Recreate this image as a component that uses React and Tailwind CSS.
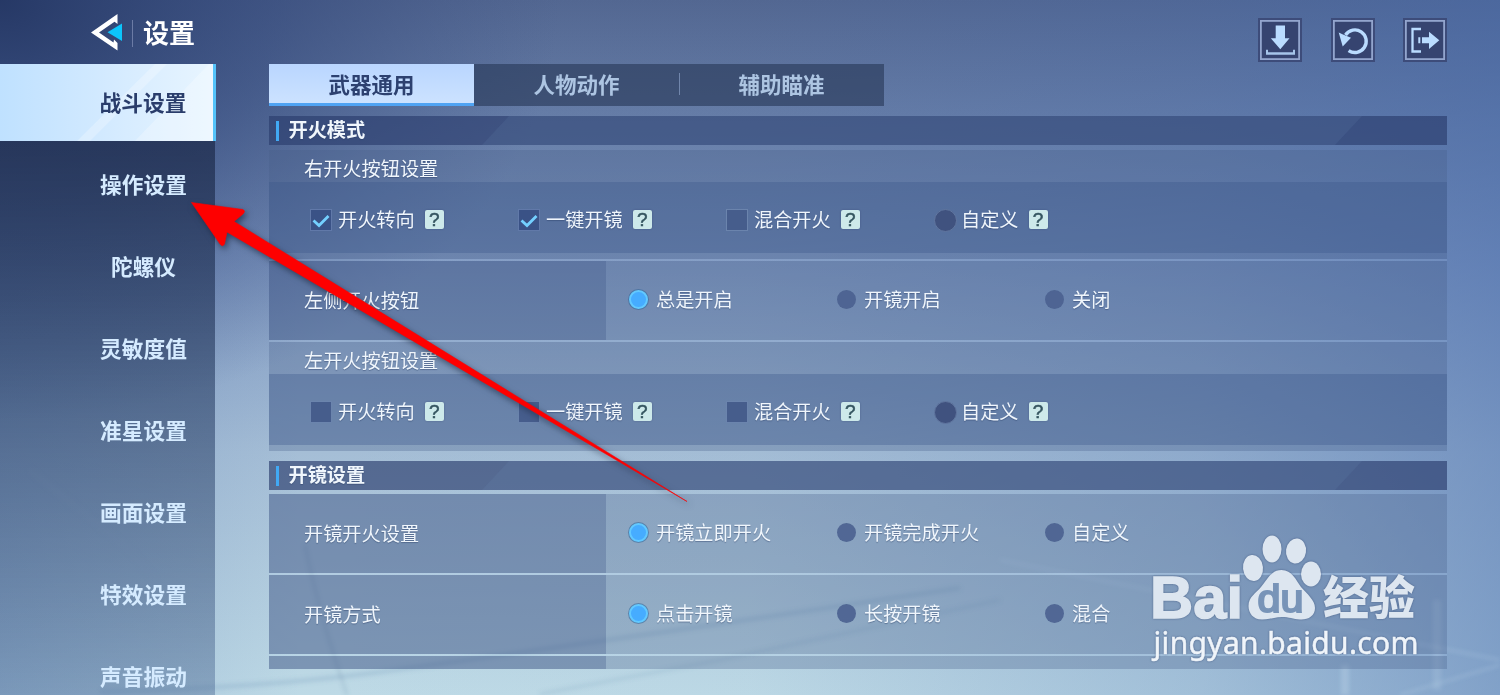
import React from "react";

const SIDEBAR = ["战斗设置", "操作设置", "陀螺仪", "灵敏度值", "准星设置", "画面设置", "特效设置", "声音振动"];
const TABS = ["武器通用", "人物动作", "辅助瞄准"];

function Backdrop() {
  return (
    <svg className="absolute inset-0 h-full w-full" viewBox="0 0 1500 695" preserveAspectRatio="none" aria-hidden="true">
      <defs>
        <linearGradient id="sky" x1="0" y1="0" x2="0" y2="1">
          <stop offset="0" stopColor="#536791" />
          <stop offset="0.16" stopColor="#657ca6" />
          <stop offset="0.38" stopColor="#7f98c0" />
          <stop offset="0.65" stopColor="#a5bed6" />
          <stop offset="1" stopColor="#bedae6" />
        </linearGradient>
        <radialGradient id="corner" gradientUnits="userSpaceOnUse" cx="0" cy="0" r="560" gradientTransform="scale(1 0.75)">
          <stop offset="0" stopColor="#243663" stopOpacity="0.95" />
          <stop offset="0.5" stopColor="#2f4477" stopOpacity="0.55" />
          <stop offset="1" stopColor="#3a4f82" stopOpacity="0" />
        </radialGradient>
        <linearGradient id="east" x1="0" y1="0" x2="1" y2="0">
          <stop offset="0" stopColor="#4569ab" stopOpacity="0.25" />
          <stop offset="0.2" stopColor="#4569ab" stopOpacity="0" />
          <stop offset="0.5" stopColor="#4569ab" stopOpacity="0.02" />
          <stop offset="0.8" stopColor="#4569ab" stopOpacity="0.24" />
          <stop offset="1" stopColor="#4569ab" stopOpacity="0.5" />
        </linearGradient>
        <filter id="soft"><feGaussianBlur stdDeviation="2" /></filter>
      </defs>
      <rect width="1500" height="695" fill="url(#sky)" />
      <rect width="1500" height="695" fill="url(#east)" />
      <rect width="1500" height="695" fill="url(#corner)" />
      <g fill="none" filter="url(#soft)">
        <path d="M100 692 Q260 688 380 672 T800 612 L960 588" stroke="#7195b8" strokeWidth="4" opacity="0.28" />
        <path d="M540 694 L720 660 L1000 600" stroke="#7195b8" strokeWidth="3" opacity="0.22" />
        <path d="M305 545 Q318 610 347 695" stroke="#5f7c9f" strokeWidth="2" opacity="0.28" />
        <path d="M1000 560 L1500 660" stroke="#d4ecf8" strokeWidth="2" opacity="0.25" />
        <path d="M1400 695 L1500 665" stroke="#d4ecf8" strokeWidth="2" opacity="0.25" />
        <path d="M1437 600 V690" stroke="#d4ecf8" strokeWidth="8" opacity="0.15" />
        <path d="M1345 665 V695" stroke="#d4ecf8" strokeWidth="8" opacity="0.25" />
        <path d="M30 470 L130 550 L155 580" stroke="#a3bfd6" strokeWidth="6" opacity="0.2" />
      </g>
    </svg>
  );
}

function IconButton({ children }) {
  return (
    <div className="h-11 w-11 border-2 border-[#3d4c7a] bg-[#364470]">
      <svg viewBox="2 2 40 40" className="h-10 w-10" fill="#badcff">
        <rect x="2.9" y="2.9" width="38.2" height="38.2" fill="none" stroke="#93a5ce" strokeWidth="1.8" />
        {children}
      </svg>
    </div>
  );
}

function Help() {
  return (
    <span className="mt-[-1px] ml-[10px] flex h-[19px] w-[19px] items-center justify-center rounded-[2px] bg-[#cde9ea] font-['Liberation_Sans',sans-serif] text-[19px] leading-none text-[#34545f] shadow-[0_0_2px_rgba(30,45,90,0.4)] [-webkit-text-stroke:0.5px_#34545f] text-shadow-none">
      ?
    </span>
  );
}

function CheckOption({ label, checked, round }) {
  return (
    <div className="flex w-[208px] items-center">
      {round ? (
        <span className="h-[23px] w-[23px] rounded-full border border-[#60769f] bg-[#40527f]" />
      ) : (
        <span className={`h-[22px] w-[22px] border ${checked ? "border-[#6179a9] bg-[#3a5286]" : "border-[#6b84ad] bg-[#465d8c]"}`}>
          {checked && (
            <svg viewBox="0 0 20 20" className="h-5 w-5" fill="none" stroke="#74d0ff" strokeWidth="2.8">
              <path d="M2.5 10.5 L8 15.5 L17.5 6" />
            </svg>
          )}
        </span>
      )}
      <span className={round ? "ml-[4px]" : "ml-[6px]"}>{label}</span>
      <Help />
    </div>
  );
}

function RadioOption({ label, selected }) {
  return (
    <div className="flex w-[208px] items-center">
      <span
        className={`h-[19px] w-[19px] rounded-full ${
          selected ? "border-2 border-[#62c9ff] bg-[#46acff] shadow-[0_0_0_1px_rgba(55,105,155,0.6)]" : "bg-[#4a608f] opacity-90"
        }`}
      />
      <span className="ml-2">{label}</span>
    </div>
  );
}

function SectionTitle({ children }) {
  return (
    <div className="relative flex h-[29px] items-center overflow-hidden bg-[rgba(42,61,110,0.66)] pl-[7px]">
      <svg className="absolute inset-0 h-full w-full" viewBox="0 0 1178 29" preserveAspectRatio="none">
        <path d="M240 0 H1093 L1066 29 H213 Z" fill="#7797c0" opacity="0.12" />
      </svg>
      <span className="h-5 w-[3px] bg-[#41a9f5]" />
      <h2 className="relative mt-[-2px] ml-[9.5px] text-[19.2px] font-bold">{children}</h2>
    </div>
  );
}

function CheckGroup({ title, checked }) {
  return (
    <div className="bg-[rgba(70,92,135,0.3)]">
      <div className="flex h-8 items-center pt-[5px] pl-[35px]">{title}</div>
      <div className="flex h-[71px] items-center bg-[rgba(60,84,134,0.34)] pt-[5px] pl-[41px]">
        <CheckOption label="开火转向" checked={checked} />
        <CheckOption label="一键开镜" checked={checked} />
        <CheckOption label="混合开火" />
        <CheckOption label="自定义" round />
      </div>
      <div className="h-[6px]" />
    </div>
  );
}

function RadioRow({ title, options }) {
  return (
    <div className="flex h-[79px] bg-[rgba(70,92,135,0.3)]">
      <div className="flex w-[337px] items-center bg-[rgba(60,84,134,0.3)] pt-px pl-[35px]">{title}</div>
      <div className="flex items-center pb-px pl-[23px]">
        {options.map((label, i) => (
          <RadioOption key={label} label={label} selected={i === 0} />
        ))}
      </div>
    </div>
  );
}

function Divider() {
  return <div className="h-[2px] bg-[rgba(180,210,240,0.15)]" />;
}

function PointerArrow() {
  return (
    <svg className="pointer-events-none absolute inset-0 h-[695px] w-[1500px]" viewBox="0 0 1500 695">
      <path
        d="M191.5 202.500 L243 209.5 Q246 211 243 214 L234 221.5 L687 501.5 L227 232 L224.500 244 Q222.500 247.500 220 244 Z"
        fill="#fe0000"
        stroke="#fe0000"
        strokeWidth="0.6"
        className="drop-shadow-[2px_3px_3px_rgba(20,30,50,0.6)]"
      />
    </svg>
  );
}

function Watermark() {
  return (
    <svg
      className="absolute top-[530px] left-[1145px] h-[140px] w-[280px] drop-shadow-[0_0_1px_rgba(60,80,120,0.7)]"
      viewBox="1145 530 280 140"
      fill="#dde6f0"
    >
      <text x="1150" y="617.500" fontFamily="Liberation Sans" fontWeight="bold" fontSize="60" stroke="#dde6f0" strokeWidth="1.5" textLength="93" lengthAdjust="spacingAndGlyphs">
        Bai
      </text>
      <ellipse cx="1253" cy="568" rx="10" ry="13" transform="rotate(-6 1253 568)" />
      <ellipse cx="1272" cy="549" rx="9.500" ry="13.500" />
      <ellipse cx="1296" cy="551" rx="10" ry="12.500" transform="rotate(8 1296 551)" />
      <ellipse cx="1311" cy="574" rx="10" ry="12.500" />
      <path d="M1281.500 570 C1292 570 1296 580 1301 587 C1307 594 1315 600 1315 608 C1315 616 1308 620 1300 619.500 C1293 619 1289 617 1282 617 C1275 617 1270 619.500 1262 619.500 C1253 619.500 1248.500 613 1248.500 606 C1248.500 597 1256 593 1261 587 C1267 580 1271 570 1281.500 570 Z" />
      <text x="1257.500" y="611.500" fontFamily="Liberation Sans" fontSize="38" fill="#7894b8" stroke="#7894b8" strokeWidth="2" textLength="46" lengthAdjust="spacingAndGlyphs">
        du
      </text>
      <text x="1323" y="613.500" fontFamily="Noto Sans CJK SC" fontWeight="900" fontSize="46" textLength="92" lengthAdjust="spacingAndGlyphs">
        经验
      </text>
      <text x="1153.500" y="653.500" fontFamily="Noto Sans" fontSize="30" fill="#f0f5fa" stroke="#f0f5fa" strokeWidth="0.5" textLength="265" lengthAdjust="spacing">
        jingyan.baidu.com
      </text>
    </svg>
  );
}

export default function App() {
  return (
    <div className="relative h-[695px] w-[1500px] overflow-hidden font-['Noto_Sans_CJK_SC',sans-serif] text-[19.2px] leading-none text-[#f0f6fc]">
      <Backdrop />

      <div className="relative flex h-full flex-col">
        <header className="flex h-16 shrink-0 items-start justify-between pr-[53px] pl-[90px]">
          <div className="flex items-center pt-[13px]">
            <svg className="h-10 w-9" viewBox="90 13 36 40">
              <path d="M91 32.500 L117.500 14 V24 L114.500 21.800 L99 32.500 L113.500 42.500 L114 39.500 L117.500 43 V50.500 Z" fill="#fff" />
              <path d="M107.500 32.300 L122 23.500 V41 Z" fill="#0cc5fb" />
            </svg>
            <span className="ml-[6px] h-[27px] w-px bg-[#6b7ba5]" />
            <h1 className="mt-[-2px] ml-[10px] text-[26px] font-bold text-white">设置</h1>
          </div>
          <div className="flex gap-[28.500px] pt-[18px]">
            <IconButton>
              <path d="M17.700 7.500 H27 V20.300 H31.500 L22.300 31.300 L12.800 20.300 H17.700 Z" />
              <path d="M8 31.700 H10 V34.300 H35 V31.700 H37 V36.800 H8 Z" opacity="0.85" />
            </IconButton>
            <IconButton>
              <path d="M14.500 17 A11.300 11.300 0 1 1 17.600 32.600" fill="none" stroke="#badcff" strokeWidth="3.400" />
              <path d="M7.700 14.500 L12 16.500 L20 19.800 L11.700 28.500 Z" />
            </IconButton>
            <IconButton>
              <path d="M18 11 H9.500 V33.500 H18" fill="none" stroke="#badcff" strokeWidth="2.300" />
              <path d="M15.300 19.300 H17.300 V25.300 H15.300 Z M19 19.300 H26 V13.700 L36.300 22.300 L26 31 V25.300 H19 Z" />
            </IconButton>
          </div>
        </header>

        <div className="flex min-h-0 flex-1">
          <nav className="flex w-[216px] shrink-0 flex-col text-[21.700px] font-bold">
            <div className="relative flex h-[77px] shrink-0 items-center justify-center overflow-hidden border-r-[3px] border-[#54c3fa] bg-linear-to-r from-[#bfe1ff] via-[#d3eaff] to-[#e8f5ff] pb-[2px] pl-[73px] text-[#2a3d6b]">
              <svg className="absolute inset-0 h-full w-full" viewBox="0 0 213 77">
                <path d="M155 0 H167 L90 77 H77 Z M209 0 H213 V77 H135 Z" fill="#fff" opacity="0.25" />
              </svg>
              <span className="relative">{SIDEBAR[0]}</span>
            </div>
            <div className="mr-px flex flex-1 flex-col overflow-hidden bg-linear-to-b from-[rgba(33,47,80,0.78)] via-[rgba(44,66,104,0.62)] via-45% to-[rgba(62,92,138,0.38)] text-[#d5ebff]">
              {SIDEBAR.slice(1).map((label) => (
                <div key={label} className="flex h-[82px] shrink-0 items-center justify-center pt-[3px] pl-[72px]">
                  {label}
                </div>
              ))}
            </div>
          </nav>

          <main className="ml-[53px] w-[1178px]">
            <div className="flex h-[42px] w-[615px] bg-[rgba(42,58,90,0.65)] text-[21.500px] font-bold text-[#adc5e2]">
              {TABS.map((label, i) => (
                <div
                  key={label}
                  className={`flex w-[205px] items-center justify-center ${
                    i === 0 ? "border-b-[3px] border-[#4fa3f3] bg-linear-to-b from-[#b9d6ff] to-[#cce2ff] text-[#2d4170]" : "pb-[3px]"
                  }`}
                >
                  {i === 2 && <span className="-ml-px mr-[58px] h-[22px] w-px bg-[#7186ac]" />}
                  <span className={i === 2 ? "mr-[58px]" : ""}>{label}</span>
                </div>
              ))}
            </div>

            <section className="mt-[10px] text-shadow-[0_1px_1px_rgba(40,60,100,0.45)]">
              <SectionTitle>开火模式</SectionTitle>
              <div className="mt-[5px]">
                <CheckGroup title="右开火按钮设置" checked />
                <Divider />
                <RadioRow title="左侧开火按钮" options={["总是开启", "开镜开启", "关闭"]} />
                <Divider />
                <CheckGroup title="左开火按钮设置" />
              </div>
            </section>

            <section className="mt-[10px] text-shadow-[0_1px_1px_rgba(40,60,100,0.45)]">
              <SectionTitle>开镜设置</SectionTitle>
              <div className="mt-[4px]">
                <RadioRow title="开镜开火设置" options={["开镜立即开火", "开镜完成开火", "自定义"]} />
                <Divider />
                <RadioRow title="开镜方式" options={["点击开镜", "长按开镜", "混合"]} />
                <Divider />
                <div className="h-[13px] bg-[rgba(70,92,135,0.3)]">
                  <div className="h-full w-[337px] bg-[rgba(60,84,134,0.3)]" />
                </div>
              </div>
            </section>
          </main>
        </div>
      </div>

      <Watermark />
      <PointerArrow />
    </div>
  );
}
